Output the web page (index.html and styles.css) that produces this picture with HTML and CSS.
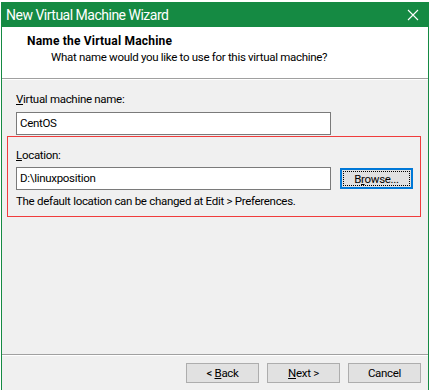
FILE: index.html
```html
<!DOCTYPE html>
<html lang="en">
<head>
    <meta charset="UTF-8">
    <title>New Virtual Machine Wizard</title>
    <link rel="stylesheet" href="styles.css">
</head>
<body>

<div class="window">
    <div class="titlebar">
        <span>New Virtual Machine Wizard</span>
        <svg class="close" width="12" height="12" viewBox="0 0 12 12">
            <path d="M1 1L11 11M11 1L1 11" stroke="#fff" stroke-width="1.1" fill="none"/>
        </svg>
    </div>

    <div class="header">
        <h1>Name the Virtual Machine</h1>
        <p>What name would you like to use for this virtual machine?</p>
    </div>

    <div class="content">
        <div class="label"><u>V</u>irtual machine name:</div>
        <div class="textbox">CentOS</div>

        <!-- red box: annotation around the location group -->
        <div class="highlight">
            <div class="label"><u>L</u>ocation:</div>
            <div class="row">
                <div class="textbox">D:\linuxposition</div>
                <button class="btn browse">B<u>r</u>owse...</button>
            </div>
            <p class="hint">The default location can be changed at Edit &gt; Preferences.</p>
        </div>
    </div>

    <div class="footer">
        <button class="btn">&lt; <u>B</u>ack</button>
        <button class="btn"><u>N</u>ext &gt;</button>
        <button class="btn">Cancel</button>
    </div>
</div>

</body>
</html>
```

FILE: styles.css
```css
body {
    margin: 0;
    padding: 2px 0 0 1px;
    background: #fff;
    font-family: Roboto, "Liberation Sans", sans-serif;
    font-size: 11.5px;
    letter-spacing: -0.3px;
    color: #000;
    overflow: hidden;
}
.window {
    width: 426px;
    height: 400px;
    border: 1px solid #158a43;
    border-top: none;
    background: #f0f0f0;
}
.titlebar {
    height: 25px;
    margin: 0 -1px;
    padding: 0 10px 0 5px;
    background: #158a43;
    color: #fff;
    font-size: 14px;
    letter-spacing: -0.5px;
    display: flex;
    align-items: center;
    justify-content: space-between;
}
.close {
    margin-top: 1px;
}
.header {
    height: 52px;
    background: #fff;
    border-bottom: 1px solid #a0a0a0;
    box-shadow: 0 1px 0 #fff;
    padding-left: 25px;
    box-sizing: border-box;
    padding-top: 7px;
}
.header h1 {
    margin: 0;
    font-size: 12px;
    font-weight: bold;
    letter-spacing: 0.2px;
    line-height: 15px;
}
.header p {
    margin: 1px 0 0 24px;
    line-height: 15px;
}
.content {
    height: 274px;
    box-sizing: border-box;
    padding: 12px 0 0 14px;
    margin-top: 1px;
}
.label {
    line-height: 15px;
    margin-bottom: 5px;
}
.label u, .btn u {
    text-decoration: underline;
}
.textbox {
    height: 21px;
    border: 1px solid #7a7a7a;
    background: #fff;
    padding-left: 3px;
    box-sizing: content-box;
    line-height: 21px;
    width: 310px;
}
.highlight {
    margin: 1px 0 0 -9px;
    width: 414px;
    border: 1px solid #f03c3c;
    padding: 11px 0 7px 8px;
    box-sizing: border-box;
}
.highlight .label {
    margin-bottom: 4px;
}
.row {
    display: flex;
    align-items: flex-start;
}
.hint {
    margin: 4px 0 0;
    line-height: 15px;
}
.btn {
    width: 73px;
    height: 20px;
    padding: 0;
    background: #e1e1e1;
    border: 1px solid #adadad;
    font-family: inherit;
    font-size: 11.5px;
    letter-spacing: -0.3px;
    color: #000;
}
.browse {
    margin: 1px 0 0 9px;
    height: 21px;
    border: 2px solid #0078d7;
    outline: 1px dotted #000;
    outline-offset: -4px;
}
.footer {
    border-top: 1px solid #a0a0a0;
    box-shadow: inset 0 1px 0 #fff;
    padding: 8px 7px 0 0;
    display: flex;
    justify-content: flex-end;
    gap: 8px;
}
```
